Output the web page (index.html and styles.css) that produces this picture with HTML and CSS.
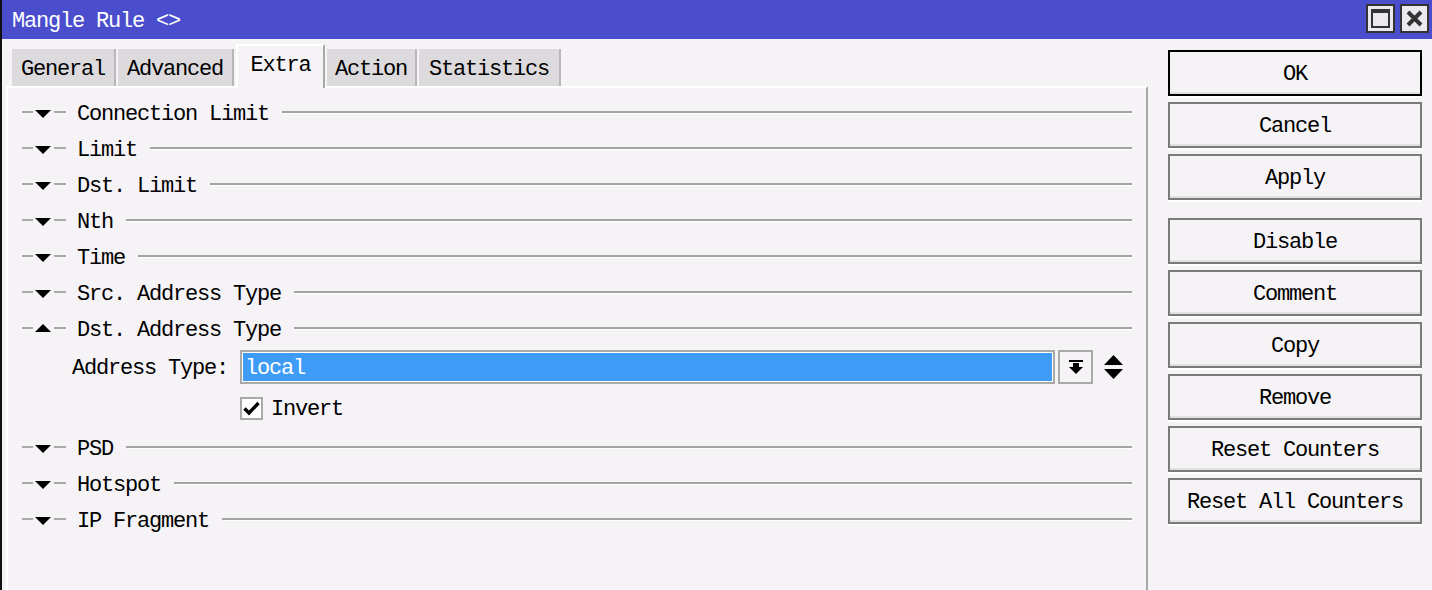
FILE: index.html
```html
<!DOCTYPE html>
<html>
<head>
<meta charset="utf-8">
<title>Mangle Rule</title>
<link rel="stylesheet" href="styles.css">
</head>
<body>
<div class="window">
  <div class="titlebar">
    <span class="title">Mangle Rule &lt;&gt;</span>
    <div class="winbtns">
      <span class="winbtn"><svg width="19" height="19" viewBox="0 0 19 19"><path d="M1 1h17v17H1z" fill="none" stroke="#333" stroke-width="2"/><rect x="1" y="1" width="17" height="3" fill="#333"/></svg></span>
      <span class="winbtn"><svg width="17" height="17" viewBox="0 0 17 17"><path d="M2 2L15 15M15 2L2 15" stroke="#333" stroke-width="4"/></svg></span>
    </div>
  </div>
  <div class="content">
    <div class="left">
      <div class="tabs">
        <div class="tab w-general">General</div>
        <div class="tab w-advanced">Advanced</div>
        <div class="tab active w-extra">Extra</div>
        <div class="tab w-action">Action</div>
        <div class="tab w-stats">Statistics</div>
      </div>
      <div class="panel">
        <div class="sec"><span class="dash"></span><span class="tri down"></span><span class="dash r"></span><span class="lbl">Connection Limit</span><span class="rule"></span></div>
        <div class="sec"><span class="dash"></span><span class="tri down"></span><span class="dash r"></span><span class="lbl">Limit</span><span class="rule"></span></div>
        <div class="sec"><span class="dash"></span><span class="tri down"></span><span class="dash r"></span><span class="lbl">Dst. Limit</span><span class="rule"></span></div>
        <div class="sec"><span class="dash"></span><span class="tri down"></span><span class="dash r"></span><span class="lbl">Nth</span><span class="rule"></span></div>
        <div class="sec"><span class="dash"></span><span class="tri down"></span><span class="dash r"></span><span class="lbl">Time</span><span class="rule"></span></div>
        <div class="sec"><span class="dash"></span><span class="tri down"></span><span class="dash r"></span><span class="lbl">Src. Address Type</span><span class="rule"></span></div>
        <div class="sec"><span class="dash"></span><span class="tri up"></span><span class="dash r"></span><span class="lbl">Dst. Address Type</span><span class="rule"></span></div>
        <div class="field">
          <span class="flabel">Address Type:</span>
          <span class="input"><span class="sel">local</span></span>
          <span class="ddbtn"><svg width="14" height="14" viewBox="0 0 14 14"><rect x="0" y="0" width="14" height="2" fill="#000"/><rect x="4" y="3" width="6" height="4" fill="#000"/><polygon points="0,7 14,7 7,14" fill="#000"/></svg></span>
          <span class="updown"><svg width="19" height="24" viewBox="0 0 19 24"><polygon points="9.5,0 19,10 0,10" fill="#000"/><polygon points="0,14 19,14 9.5,24" fill="#000"/></svg></span>
        </div>
        <div class="check">
          <span class="box"><svg width="17" height="15" viewBox="0 0 17 15"><path d="M1.5 7.5L6 12L15.5 2" fill="none" stroke="#000" stroke-width="3.4"/></svg></span>
          <span class="clabel">Invert</span>
        </div>
        <div class="sec"><span class="dash"></span><span class="tri down"></span><span class="dash r"></span><span class="lbl">PSD</span><span class="rule"></span></div>
        <div class="sec"><span class="dash"></span><span class="tri down"></span><span class="dash r"></span><span class="lbl">Hotspot</span><span class="rule"></span></div>
        <div class="sec"><span class="dash"></span><span class="tri down"></span><span class="dash r"></span><span class="lbl">IP Fragment</span><span class="rule"></span></div>
      </div>
    </div>
    <div class="buttons">
      <div class="btn default">OK</div>
      <div class="btn">Cancel</div>
      <div class="btn">Apply</div>
      <div class="btn spaced">Disable</div>
      <div class="btn">Comment</div>
      <div class="btn">Copy</div>
      <div class="btn">Remove</div>
      <div class="btn">Reset Counters</div>
      <div class="btn">Reset All Counters</div>
    </div>
  </div>
</div>
</body>
</html>
```
FILE: styles.css
```css
* { box-sizing: border-box; }
html, body { margin: 0; padding: 0; }
body {
  width: 1432px;
  height: 590px;
  overflow: hidden;
  background: #f6f3f6;
  font-family: "Liberation Mono", "DejaVu Sans Mono", monospace;
  font-size: 22px;
  letter-spacing: -1.2px;
  color: #000;
}
.window {
  height: 590px;
  border-left: 2px solid #111;
  display: flex;
  flex-direction: column;
}
.titlebar {
  height: 39px;
  background: #4a4ecc;
  display: flex;
  align-items: center;
  padding-left: 10px;
  padding-right: 3px;
}
.title {
  color: #fff;
  flex: 1;
  padding-top: 4px;
}
.winbtns { display: flex; gap: 5px; align-self: flex-start; margin-top: 4px; }
.winbtn {
  width: 29px;
  height: 29px;
  border: 2px solid #333;
  background: #ece9ee;
  display: flex;
  align-items: center;
  justify-content: center;
}
.content { flex: 1; display: flex; }
.left {
  margin-left: 4px;
  width: 1142px;
  display: flex;
  flex-direction: column;
}
.tabs {
  height: 47px;
  display: flex;
  align-items: flex-end;
  gap: 2px;
  padding-left: 6px;
}
.tab {
  height: 37px;
  background: #dddadd;
  border-right: 2px solid #b8b6b8;
  display: flex;
  align-items: center;
  justify-content: center;
  padding-top: 3px;
}
.tab.active {
  height: 44px;
  margin-bottom: -2px;
  background: #f6f3f6;
  border-top: 2px solid #fff;
  border-left: 2px solid #fff;
  border-right: 2px solid #a8a8a8;
  padding-top: 0;
  padding-bottom: 4px;
  position: relative;
  z-index: 1;
}
.w-general { width: 104px; }
.w-advanced { width: 116px; }
.w-extra { width: 89px; }
.w-action { width: 90px; }
.w-stats { width: 142px; }
.panel {
  flex: 1;
  border-top: 2px solid #fff;
  border-left: 2px solid #fff;
  border-right: 2px solid #a8a8a8;
  padding: 7px 14px 0 14px;
}
.sec {
  height: 36px;
  display: flex;
  align-items: center;
}
.dash {
  align-self: flex-start;
  margin-top: 16px;
  width: 11px;
  height: 2px;
  background: #a9a9a9;
}
.dash.r { width: 12px; margin-left: 3px; }
.tri {
  align-self: flex-start;
  margin-top: 15px;
  margin-left: 2px;
  width: 0;
  height: 0;
  border-left: 8px solid transparent;
  border-right: 8px solid transparent;
}
.tri.down { border-top: 8px solid #000; }
.tri.up { border-bottom: 8px solid #000; margin-top: 13px; }
.lbl { margin-left: 11px; white-space: pre; padding-top: 2px; }
.rule {
  align-self: flex-start;
  margin-top: 16px;
  margin-left: 13px;
  flex: 1;
  height: 3px;
  border-top: 2px solid #a4a4a4;
  border-bottom: 1px solid #fff;
}
.field {
  margin-top: 3px;
  height: 34px;
  display: flex;
  align-items: center;
  padding-left: 50px;
}
.flabel { width: 168px; white-space: pre; padding-top: 2px; }
.input {
  width: 815px;
  height: 34px;
  border: 2px solid #a9a9a9;
  padding: 1px;
  background: #fff;
  display: flex;
}
.sel {
  flex: 1;
  background: #3f9cf6;
  color: #fff;
  display: flex;
  align-items: center;
  padding-left: 2px;
  padding-top: 2px;
}
.ddbtn {
  margin-left: 3px;
  width: 35px;
  height: 34px;
  border: 2px solid #a9a9a9;
  background: #f6f3f6;
  display: flex;
  align-items: center;
  justify-content: center;
}
.updown {
  margin-left: 11px;
  display: flex;
  align-items: center;
}
.check {
  margin-top: 13px;
  height: 23px;
  display: flex;
  align-items: center;
  padding-left: 218px;
}
.box {
  width: 23px;
  height: 23px;
  border: 2px solid #a9a9a9;
  background: #fff;
  display: flex;
  align-items: center;
  justify-content: center;
}
.clabel { margin-left: 8px; padding-top: 2px; }
.check + .sec { margin-top: 10px; }
.buttons {
  margin-left: 20px;
  width: 254px;
  padding-top: 11px;
  display: flex;
  flex-direction: column;
  gap: 6px;
}
.btn {
  height: 46px;
  border: 2px solid #7a7a7a;
  background: #f6f3f6;
  box-shadow: inset 0 -2px 0 #e2e0e2, 0 2px 0 #fff;
  display: flex;
  align-items: center;
  justify-content: center;
  white-space: pre;
  padding-top: 2px;
}
.btn.default { border-color: #000; }
.btn.spaced { margin-top: 12px; }
```
